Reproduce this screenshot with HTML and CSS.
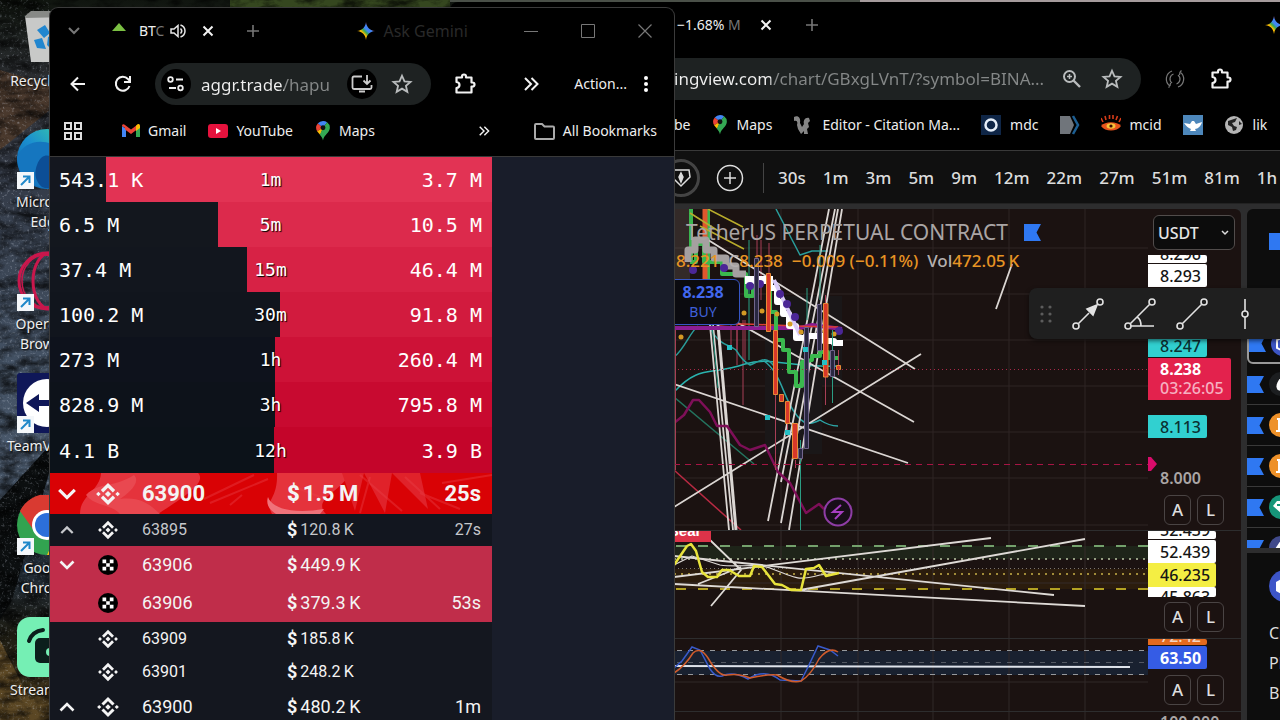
FILE: index.html
```html
<!DOCTYPE html>
<html lang="en">
<head>
<meta charset="utf-8">
<title>Desktop</title>
<meta name="viewport" content="width=device-width, initial-scale=1">
<link rel="stylesheet" href="styles.css">
</head>
<body class="desktop">

<svg class="defs" width="0" height="0" aria-hidden="true">
  <defs>
    <linearGradient id="gem" x1="0" y1="1" x2="1" y2="0"><stop offset="0.2" stop-color="#fbbc04"/><stop offset="0.36" stop-color="#fbbc04"/><stop offset="0.46" stop-color="#34a853"/><stop offset="0.55" stop-color="#4285f4"/><stop offset="0.66" stop-color="#4285f4"/><stop offset="0.8" stop-color="#ea4335"/></linearGradient>
    <linearGradient id="edge" x1="0" y1="1" x2="1" y2="0"><stop offset="0" stop-color="#0c59a4"/><stop offset="0.5" stop-color="#1b8fd0"/><stop offset="1" stop-color="#3fd8a0"/></linearGradient>
  </defs>
  <symbol id="i-gemini" viewBox="0 0 20 20"><path d="M10 0C10.800 6 14 9.200 20 10C14 10.800 10.800 14 10 20C9.200 14 6 10.800 0 10C6 9.200 9.200 6 10 0Z" fill="url(#gem)"/></symbol>
  <symbol id="i-close" viewBox="0 0 12 12"><path d="M1.500 1.500L10.500 10.500M10.500 1.500L1.500 10.500" stroke="currentColor" stroke-width="2" fill="none"/></symbol>
  <symbol id="i-plus" viewBox="0 0 14 14"><path d="M7 1V13M1 7H13" stroke="currentColor" stroke-width="1.600" fill="none"/></symbol>
  <symbol id="i-star" viewBox="0 0 24 24"><path d="M12 3L14.700 9.100L21.300 9.700L16.300 14.100L17.800 20.600L12 17.100L6.200 20.600L7.700 14.100L2.700 9.700L9.300 9.100Z" stroke="currentColor" stroke-width="2" fill="none"/></symbol>
  <symbol id="i-puzzle" viewBox="0 0 24 24"><path d="M3.500 5.500H9V4.500A2 2 0 0 1 13 4.500V5.500H18.500V10.500H19.500A2 2 0 0 1 19.500 14.500H18.500V20.500H3.500V16C7.500 15.500 7.500 10.500 3.500 10Z" stroke="currentColor" stroke-width="2.200" stroke-linejoin="round" fill="none"/></symbol>
  <symbol id="i-more" viewBox="0 0 16 14"><path d="M2 1L8 7L2 13M8.500 1L14.500 7L8.500 13" stroke="currentColor" stroke-width="2" fill="none"/></symbol>
  <symbol id="i-pin" viewBox="0 0 16 22"><path d="M8 0A7.500 7.500 0 0 0 2.200 2.800L8 7.500L12.500 1.500A7.500 7.500 0 0 0 8 0Z" fill="#4285f4"/><path d="M2.200 2.800A7.500 7.500 0 0 0 1.500 11.200L8 7.500Z" fill="#ea4335"/><path d="M1.500 11.200L8 7.500L5 15.500Z" fill="#fbbc04"/><path d="M12.500 1.500A7.500 7.500 0 0 1 15 10C13 14.500 9 16 8 21.500C7.500 18.500 6 17 4.500 15L8 7.500Z" fill="#34a853"/><circle cx="8" cy="7.500" r="2.700" fill="#111"/></symbol>
  <symbol id="i-binance" viewBox="0 0 22 22"><path d="M5.500 8.500L11 3L16.500 8.500M5.500 13.500L11 19L16.500 13.500" stroke="currentColor" stroke-width="3" fill="none"/><path d="M11 8.200L13.800 11L11 13.800L8.200 11ZM2.200 8.900L4.300 11L2.200 13.100L0.100 11ZM19.800 8.900L21.900 11L19.800 13.100L17.700 11Z" fill="currentColor"/></symbol>
  <symbol id="i-okx" viewBox="0 0 20 20"><circle cx="10" cy="10" r="10" fill="#000"/><path d="M4.500 4.500H8.200V8.200H4.500ZM11.800 4.500H15.500V8.200H11.800ZM8.200 8.200H11.800V11.800H8.200ZM4.500 11.800H8.200V15.500H4.500ZM11.800 11.800H15.500V15.500H11.800Z" fill="#fff"/></symbol>
  <symbol id="i-down" viewBox="0 0 16 10"><path d="M1.500 1.500L8 8L14.500 1.500" stroke="currentColor" stroke-width="2.600" fill="none"/></symbol>
  <symbol id="i-up" viewBox="0 0 16 10"><path d="M1.500 8.500L8 2L14.500 8.500" stroke="currentColor" stroke-width="2.600" fill="none"/></symbol>
  <symbol id="i-flag" viewBox="0 0 17 17"><path d="M0 0H17L12.500 8.500L17 17H0Z" fill="#2f78f2"/></symbol>
  <symbol id="i-shortcut" viewBox="0 0 17 17"><path d="M0 0H17V17H0Z" fill="#f4f7fa"/><path d="M4 13L12 5M6 4.500H12.500V11" stroke="#1f88c9" stroke-width="2" fill="none"/></symbol>
</svg>

<svg class="wallpaper" viewBox="0 0 1280 720" preserveAspectRatio="xMinYMin slice" aria-hidden="true">
  <defs>
    <linearGradient id="rock" x1="0" y1="0" x2="0" y2="1"><stop offset="0" stop-color="#10150f"/><stop offset="0.130" stop-color="#303238"/><stop offset="0.250" stop-color="#343b48"/><stop offset="0.500" stop-color="#435163"/><stop offset="0.650" stop-color="#4a596c"/><stop offset="0.800" stop-color="#222c36"/><stop offset="0.880" stop-color="#1c1b12"/><stop offset="1" stop-color="#4b3b1e"/></linearGradient>
    <filter id="grain" x="0" y="0" width="1" height="1"><feTurbulence type="fractalNoise" baseFrequency="0.050 0.100" numOctaves="5" seed="8"/><feColorMatrix values="0 0 0 0 0  0 0 0 0 0  0 0 0 0 0  2.400 0 0 0 -0.900"/></filter>
    <filter id="speck" x="0" y="0" width="1" height="1"><feTurbulence type="fractalNoise" baseFrequency="0.400" numOctaves="2" seed="3"/><feColorMatrix values="0 0 0 0 0.600  0 0 0 0 0.650  0 0 0 0 0.750  3 0 0 0 -1.700"/></filter>
  </defs>
  <path d="M0 0H1280V720H0Z" fill="url(#rock)"/>
  <path d="M0 70L50 85V110L0 150Z" fill="#4a392d"/>
  <path d="M230 0H450V8H230Z" fill="#35471f"/>
  <path d="M450 0H860V2H450Z" fill="#4a5048"/><path d="M860 0H1280V2H860Z" fill="#a59b9c"/>
  <path d="M0 500L50 445V470L12 600L0 620Z" fill="#0c0f10"/>
  <path d="M0 640L30 700L50 690V720H0Z" fill="#5b4724"/>
  <path d="M0 0H49V720H0Z" filter="url(#speck)" opacity="0.400"/>
  <path d="M0 0H450V720H0Z" filter="url(#grain)" opacity="0.700"/>
</svg>

<nav class="shortcuts" aria-label="Desktop shortcuts">
  <a class="shortcut" href="#"><svg class="shortcut-icon" viewBox="0 0 60 60"><path d="M8 5L52 5L46 51H14Z" fill="#c8c9c8"/><path d="M8 5L14 0H52V6L8 7Z" fill="#878986"/><path d="M20 19L28 14L33 22L27 27ZM17 29L25 27L29 38L20 37ZM31 26L39 22L42 31L34 38L30 34Z" fill="#2186cf"/></svg><span>Recycle Bin</span></a>
  <a class="shortcut" href="#"><svg class="shortcut-icon" viewBox="0 0 60 60"><circle cx="30" cy="30" r="30" fill="url(#edge)"/><path d="M0 28C8 10 30 8 46 22L52 36C36 38 34 34 35 28C22 22 14 42 28 59C12 57 0 44 0 28Z" fill="#1576bf"/><path d="M20 36C24 24 32 26 35 28C31 40 44 46 57 40C50 56 34 62 25 58C18 52 17 44 20 36Z" fill="#0c4e96"/><use href="#i-shortcut" x="0" y="43" width="17" height="17"/></svg><span>Microsoft<br>Edge</span></a>
  <a class="shortcut" href="#"><svg class="shortcut-icon" viewBox="0 0 60 60"><g fill="none" stroke="#c9174c" stroke-width="3"><circle cx="30" cy="30" r="28"/><ellipse cx="33" cy="30" rx="17" ry="28"/><ellipse cx="28" cy="30" rx="23" ry="26" stroke-width="1.500"/></g><use href="#i-shortcut" x="0" y="43" width="17" height="17"/></svg><span>Opera GX<br>Browser</span></a>
  <a class="shortcut" href="#"><svg class="shortcut-icon" viewBox="0 0 60 60"><rect width="60" height="60" rx="3" fill="#0f1758"/><circle cx="30" cy="30" r="24" fill="#fff"/><path d="M9 30L22 21V27H38V21L51 30L38 39V33H22V39Z" fill="#0f1758"/><use href="#i-shortcut" x="0" y="43" width="17" height="17"/></svg><span>TeamViewer</span></a>
  <a class="shortcut" href="#"><svg class="shortcut-icon" viewBox="0 0 60 60"><circle cx="30" cy="30" r="30" fill="#32a350"/><path d="M3 16A30 30 0 0 1 57 16L30 20Z" fill="#d93a31"/><path d="M3 16L18 37L30 15Z" fill="#d93a31"/><path d="M57 16A30 30 0 0 1 30 60L44 30L30 16Z" fill="#fbc116"/><circle cx="30" cy="30" r="15" fill="#fff"/><circle cx="30" cy="30" r="12" fill="#2c6fda"/><use href="#i-shortcut" x="0" y="43" width="17" height="17"/></svg><span>Google<br>Chrome</span></a>
  <a class="shortcut" href="#"><svg class="shortcut-icon" viewBox="0 0 60 60"><rect width="60" height="60" rx="13" fill="#75efb4"/><rect x="18" y="21" width="34" height="25" rx="5" fill="#0b1f1c"/><circle cx="33" cy="35" r="4" fill="#75efb4"/><path d="M12 24C14 18 18 14 26 13" stroke="#0b1f1c" stroke-width="4" stroke-linecap="round" fill="none"/></svg><span>Streamlabs</span></a>
</nav>

<section class="window window-back" aria-label="TradingView">
  <header class="tabs tabs-back">
    <span class="tab-title">−1.68% <span class="faded">M</span></span>
    <button class="icon-btn bright" aria-label="Close tab"><svg width="12" height="12"><use href="#i-close"/></svg></button>
    <button class="icon-btn dim tab-new" aria-label="New tab"><svg width="14" height="14"><use href="#i-plus"/></svg></button>
    <button class="icon-btn gemini-edge" aria-label="Gemini"><svg width="18" height="18"><use href="#i-gemini"/></svg></button>
  </header>
  <div class="addressbar addressbar-back">
    <div class="omnibox omnibox-back">
      <input class="url url-back" aria-label="Address" value="ingview.com/chart/GBxgLVnT/?symbol=BINA..." readonly>
      <button class="icon-btn" aria-label="Zoom"><svg width="20" height="20" viewBox="0 0 20 20" fill="none" stroke="currentColor"><circle cx="7.500" cy="7.500" r="5.500" stroke-width="2"/><path d="M11.500 11.500L18 18" stroke-width="2.400"/><path d="M7.500 5V10M5 7.500H10" stroke-width="1.500"/></svg></button>
      <button class="icon-btn" aria-label="Bookmark"><svg width="22" height="22"><use href="#i-star"/></svg></button>
    </div>
    <button class="icon-btn dim ext-loop" aria-label="Extension"><svg width="20" height="20" viewBox="0 0 20 20" fill="none" stroke="#777" stroke-width="1.200"><path d="M7 2A8.500 8.500 0 0 0 5 17M5 17L3.500 18.500M5 17L5.500 14M13 18A8.500 8.500 0 0 0 15 3M15 3L16.500 1.500M15 3L14.500 6"/><path d="M8.500 5A5.200 5.200 0 0 0 7 14M11.500 15A5.200 5.200 0 0 0 13 6"/></svg></button>
    <button class="icon-btn bright" aria-label="Extensions"><svg width="24" height="24"><use href="#i-puzzle"/></svg></button>
  </div>
  <nav class="bookmarks bookmarks-back" aria-label="Bookmarks">
    <a href="#">be</a>
    <a href="#"><svg width="16" height="20"><use href="#i-pin"/></svg>Maps</a>
    <a href="#"><svg width="20" height="20" viewBox="0 0 20 20"><path d="M1 2C5 0 8 3 7 8L9 12L11 9C10 6 12 2 16 3L17 6L15 8L16 12L14 14L15 19H11V16L8 19L5 14L4 10C5 7 4 5 1 6Z" fill="#858585"/></svg>Editor - Citation Ma...</a>
    <a href="#"><svg width="20" height="20" viewBox="0 0 20 20"><path d="M0 0H20V20H0Z" fill="#0f2647"/><circle cx="10" cy="10" r="5.500" fill="none" stroke="#e6eef8" stroke-width="2.500"/></svg>mdc</a>
    <a href="#" aria-label="Arrow"><svg width="20" height="20" viewBox="0 0 20 20"><path d="M0 1H10L14 10L10 19H0Z" fill="#70757b"/><path d="M13 1L18 10L13 19" stroke="#1d5f93" stroke-width="2.500" fill="none"/></svg></a>
    <a href="#"><svg width="20" height="20" viewBox="0 0 20 20"><path d="M0 11C4 6 16 6 20 11C16 17 4 17 0 11Z" fill="#e8541c"/><ellipse cx="10" cy="11" rx="4.500" ry="2.800" fill="#f7c33a"/><circle cx="10" cy="11" r="1.600" fill="#3b0d04"/><path d="M2 7L0 3M5 5L4 1M8.500 4V0M12 4V0M15 5L16.500 1M18 7L20 3" stroke="#d63b18" stroke-width="1.600"/></svg>mcid</a>
    <a href="#" aria-label="Lamp"><svg width="20" height="20" viewBox="0 0 20 20"><path d="M0 0H20V20H0Z" fill="#4d87bb"/><path d="M1 8L7 9L9 6H11L13 9L19 7C18 11 15 14 12 14L13 16H7L8 14C5 13 3 11 1 8Z" fill="#fff"/></svg></a>
    <a href="#"><svg width="20" height="20" viewBox="0 0 20 20"><circle cx="10" cy="10" r="9" fill="#b5b5b5"/><path d="M4 6L10 4L13 3L11 7L8 8L10 11L13 12L12 15L9 16L8 12L4 10Z" fill="#222"/><path d="M15 6L18 9L15 10Z" fill="#222"/></svg>lik</a>
  </nav>
  <div class="timeframes">
    <button class="ring" aria-label="Symbol shape"><svg width="22" height="22" viewBox="0 0 22 22" fill="none" stroke="#ddd" stroke-width="1.500"><path d="M3 3H19L20 10L11 19L2 10Z"/><path d="M11 6L13 10L11 15L9 10Z" fill="#ddd"/></svg></button>
    <button class="add-symbol" aria-label="Add symbol"><svg width="28" height="28" viewBox="0 0 28 28" fill="none" stroke="#ddd" stroke-width="1.500"><circle cx="14" cy="14" r="12.500"/><path d="M14 8V20M8 14H20"/></svg></button>
    <span class="divider"></span>
    <button>30s</button><button>1m</button><button>3m</button><button>5m</button><button>9m</button><button>12m</button><button>22m</button><button>27m</button><button>51m</button><button>81m</button><button>1h</button>
  </div>

  <div class="workspace">
    <main class="chart">
      <div class="pane">
        <svg class="plot" viewBox="674 209 474 321" preserveAspectRatio="xMinYMin slice" role="img" aria-label="Price chart">
          <path d="M781 209V530M858 209V530M933 209V530M1009 209V530M1085 209V530M674 248H1148M674 294H1148M674 340H1148M674 386H1148M674 432H1148M674 478H1148M674 525H1148" stroke="#2e2525" fill="none"/>
          <path d="M765 296H842V385H822V454H765Z" fill="#1a1718"/>
          <path d="M674 209H690V280H674Z" fill="#7c7570" opacity="0.250"/>
          <g fill="none" stroke-linejoin="round">
            <path d="M691 209V262M708 209V280" stroke="#3bb54e" stroke-width="4"/>
            <path d="M705 209V282" stroke="#e0572d" stroke-width="5"/>
            <path d="M708 209L743 227M700 226L744 249M690 213L720 232" stroke="#b9ac2b" stroke-width="1.500"/>
            <path d="M757 235V330M769 243V332M743 320V405M731 320V350M737 325V350M745 320V360M761 240V300M737 320V365" stroke="#a83f56"/>
            <path d="M749 240V360M776 330V350M719 330V345" stroke="#28a186"/>
            <path d="M674 470L741 530" stroke="#b92a43" stroke-width="1.500"/>
            <path d="M674 397L754 464" stroke="#24745f" stroke-width="1.500"/>
            <path d="M674 392C700 364 710 376 745 364C770 356 790 368 838 366" stroke="#2ab3ae" stroke-width="1.500"/>
            <path d="M776 209L800 255L812 251H828M674 357C684 350 690 332 698 326M710 328C720 346 728 344 736 350C742 360 748 364 750 365C762 360 766 356 774 366" stroke="#2a9d9b" stroke-width="1.500"/>
            <path d="M764 361C780 372 783 395 793 410C804 428 812 424 820 420C826 424 832 426 838 426" stroke="#2ca4a5" stroke-width="1.500"/>
            <g stroke="#dbd6d3" stroke-width="1.800">
              <path d="M829 209L768 521M835 209L781 482M838 209L781 523M842 209L789 530M705 238L915 369M738 323L914 422M674 384L908 463M674 507L921 354M996 309L1012 264M710 325L729 530M713 325L733 530"/>
              <path d="M718 325L736 530" stroke-width="3"/>
            </g>
            <path d="M712 325L718 388" stroke="#1f8f78"/>
            <path d="M674 423L684 415L693 400L699 400L710 412L717 426H727L740 445L750 450L765 445L778 472L790 483L806 513L819 504L824 509" stroke="#7e0f58" stroke-width="2.500"/>
            <path d="M674 328H800L812 325L842 329" stroke="#8b1d93" stroke-width="4"/>
            <path d="M720 325C750 322 760 326 838 327" stroke="#db3e35" stroke-width="1.500"/>
            <path d="M690 262H696V244H704V262H722V274H746V296H753V282H770V312H776V340H783V350H789V372H796V386H802V362L812 360V356H820V352H828V358H838" stroke="#3ab84e" stroke-width="4"/>
            <path d="M688 262V250H695V240H706V250H714V258H726V266H736V274H746" stroke="#a5a0a0" stroke-width="7"/>
            <path d="M745 280H770" stroke="#fff" stroke-width="8"/>
            <path d="M770 276V288H777V302H783V314H789V326H796V338H806V336H824V341H834V343H843" stroke="#fff" stroke-width="6"/>
            <path d="M774 280L800 335" stroke="#d9cbf8" stroke-width="4"/>
          </g>
          <g fill="#4b2696"><circle cx="693" cy="270" r="4"/><circle cx="724" cy="268" r="4"/><circle cx="750" cy="286" r="4"/><circle cx="760" cy="284" r="4"/><circle cx="780" cy="294" r="4"/><circle cx="787" cy="304" r="4"/><circle cx="795" cy="317" r="4"/><circle cx="839" cy="331" r="4"/></g>
          <g fill="#d49a24"><circle cx="681" cy="337" r="2.500"/><circle cx="744" cy="313" r="2.500"/><circle cx="762" cy="311" r="2.500"/><circle cx="777" cy="314" r="2.500"/><circle cx="790" cy="324" r="2.500"/><circle cx="801" cy="332" r="2.500"/><circle cx="820" cy="331" r="2.500"/><circle cx="834" cy="334" r="2.500"/></g>
          <path d="M675.500 330V470M775.500 395V470M787.500 402V430M795.500 460V468M825.500 295V405M838.500 350V375" stroke="#a83f56"/>
          <path d="M800.500 440V530M807 288V320M832.500 330V403M820 245V300" stroke="#2b9d83"/>
          <g fill="#d8382a" stroke="#e88a35"><path d="M766.500 273.500H770.500V331.500H766.500ZM773.500 330.500H777.500V394.500H773.500ZM779.500 394.500H783.500V401.500H779.500ZM785.500 401.500H789.500V423.500H785.500ZM792.500 423.500H797.500V458.500H792.500ZM823.500 303.500H828V377H823.500ZM836.500 365.500H840.500V369.500H836.500Z"/></g>
          <g fill="#292741" stroke="#71658c"><path d="M754.500 258.500H758.500V326.500H754.500ZM804.500 327.500H808.500V448.500H804.500ZM798.500 448.500H802.500V458.500H798.500ZM817.500 304.500H821.500V350.500H817.500ZM830.500 350.500H834.500V376.500H830.500Z"/></g>
          <g fill="#25c0c5"><path d="M727 345H732V350H727ZM765 415H770V420H765ZM785 430H790V435H785ZM803 347H808V352H803ZM822 360H827V365H822Z"/></g>
          <path d="M674 369.500H1148" stroke="#a92948" stroke-dasharray="1 3"/>
          <path d="M674 464.500H1148" stroke="#a61544" stroke-dasharray="6 5"/>
          <path d="M674.500 209V530" stroke="#555"/>
        </svg>
        <div class="legend">
          <h1 class="symbol">TetherUS PERPETUAL CONTRACT <svg width="17" height="17" aria-hidden="true"><use href="#i-flag"/></svg></h1>
          <p class="ohlc"><span>8.221</span><span><b>C</b>8.238</span><span>−0.009 (−0.11%)</span><span><b>Vol</b>472.05&#8201;K</span></p>
        </div>
        <button class="buy"><strong>8.238</strong>BUY</button>
        <button class="bolt" aria-label="Events"><svg width="30" height="30" viewBox="0 0 30 30"><circle cx="15" cy="15" r="13.500" fill="#170e18" stroke="#8e3da5" stroke-width="2"/><path d="M18 8L10 15H19L12 22" fill="none" stroke="#a63fc0" stroke-width="2"/></svg></button>
        <div class="axis">
          <select class="currency" aria-label="Currency"><option>USDT</option></select>
          <span class="tag white cut-top"><i>8.296</i></span>
          <span class="tag white">8.293</span>
          <span class="tag cyan after-tools">8.247</span>
          <span class="tag last"><strong>8.238</strong><span>03:26:05</span></span>
          <span class="tag cyan lower">8.113</span>
          <svg class="marker" width="9" height="14" viewBox="0 0 9 14" aria-hidden="true"><path d="M0 0H3L9 7L3 14H0Z" fill="#d90c6b"/></svg>
          <span class="tick">8.000</span>
          <span class="scale"><button>A</button><button>L</button></span>
        </div>
      </div>
      <div class="pane">
        <svg class="plot" viewBox="674 531 474 107" preserveAspectRatio="xMinYMin slice" role="img" aria-label="RSI">
          <path d="M674 546H1148V559H674Z" fill="#1e2419"/><path d="M674 569H1148V589H674Z" fill="#2b1c0d"/>
          <path d="M781 531V638M858 531V638M933 531V638M1009 531V638M1085 531V638M674 583H1148" stroke="#342b2b"/>
          <path d="M676 546H1148" stroke="#74a16c" stroke-width="2" stroke-dasharray="10 12"/>
          <path d="M676 589H1148" stroke="#b3a223" stroke-width="2" stroke-dasharray="10 12"/>
          <path d="M674 559H1148" stroke="#bcc6a5" stroke-width="1.500" stroke-dasharray="2 5"/>
          <path d="M674 568.500H1148" stroke="#7d7872" stroke-dasharray="1 3"/>
          <path d="M674 574H1148" stroke="#c9b148" stroke-width="1.500" stroke-dasharray="2 5"/>
          <g fill="none" stroke="#dedad6" stroke-width="1.800" stroke-linejoin="round">
            <path d="M674 577L991 538M800 590L1085 539M674 556L1054 595M674 584L1085 606M710 540L741 570L711 606M698 584L741 567"/>
            <path d="M674 565L692 556L720 565C740 568 760 562 775 570C800 580 800 580 820 575L839 573" stroke-width="1.200"/>
            <path d="M674 565L687 546L691 544L696 551L702 572L708 577H717L722 570H729L739 576H750L754 566L762 567L775 584L782 585L791 590H801L806 569L814 568L819 565L826 576L839 573" stroke="#e8e33c" stroke-width="2.500"/>
          </g>
          <path d="M674 531H711V542H674Z" fill="#dd3349"/><text class="bear" x="668" y="536">Bear</text>
          <path d="M674.500 531V638" stroke="#555"/>
        </svg>
        <div class="axis axis-rsi">
          <span class="tag wide white cut-top"><i>52.439</i></span>
          <span class="tag wide white">52.439</span>
          <span class="tag wide yellow">46.235</span>
          <span class="tag wide white cut-bottom">45.863</span>
          <span class="scale"><button>A</button><button>L</button></span>
        </div>
      </div>
      <div class="pane">
        <svg class="plot" viewBox="674 639 474 72" preserveAspectRatio="xMinYMin slice" role="img" aria-label="Stochastic">
          <path d="M674 651H1148V675H674Z" fill="#192130"/>
          <path d="M781 639V711M858 639V711M933 639V711M1009 639V711M1085 639V711M674 682H1148" stroke="#302829"/>
          <path d="M677 650.500H1148M677 674.500H1148" stroke="#96999d" stroke-dasharray="5 6"/>
          <path d="M677 662.500H1148" stroke="#535862" stroke-dasharray="5 6"/>
          <path d="M674 666L1130 667" stroke="#dde2ea" stroke-width="2"/>
          <g fill="none" stroke-width="1.500"><path d="M674 668L682 661L692 647L700 650L710 669Q716 678 722 676Q733 671 748 679Q765 668 780 680L801 681L808 667L818 646L830 650L838 656" stroke="#385acb"/><path d="M674 673Q685 666 693 653Q700 646 708 658Q719 677 727 675Q739 673 750 678Q768 674 777 675Q792 684 801 681Q811 675 819 659Q829 646 838 652" stroke="#cf5c2c"/></g>
          <path d="M674.500 639V711" stroke="#555"/>
        </svg>
        <div class="axis axis-stoch">
          <span class="tag orange cut-top"><i>72.42</i></span>
          <span class="tag blue"><strong>63.50</strong></span>
          <span class="scale"><button>A</button><button>L</button></span>
        </div>
      </div>
      <div class="pane">
        <svg class="plot" viewBox="674 712 474 8" preserveAspectRatio="xMinYMin slice" aria-hidden="true"><path d="M781 712V720M858 712V720M933 712V720M1009 712V720M1085 712V720" stroke="#302829"/></svg>
        <div class="axis axis-last"><span class="tick">100.000</span></div>
      </div>
    </main>
    <aside class="sidebar">
      <div class="watchlist">
        <div class="watch-head"><svg width="17" height="17" aria-hidden="true"><use href="#i-flag"/></svg></div>
        <div class="watch-row selected"><svg width="17" height="17"><use href="#i-flag"/></svg><svg width="24" height="24" viewBox="0 0 24 24"><circle cx="12" cy="12" r="12" fill="#3c55c4"/><path d="M12 5L18 8V16L12 19L6 16V8Z" fill="none" stroke="#fff" stroke-width="2"/></svg></div>
        <div class="watch-row"><svg width="17" height="17"><use href="#i-flag"/></svg><svg width="24" height="24" viewBox="0 0 24 24"><circle cx="12" cy="12" r="12" fill="#1c1e20"/><path d="M12 5C17 11 18 18 12 19C5 18 7 11 12 5Z" fill="#fff"/></svg></div>
        <div class="watch-row"><svg width="17" height="17"><use href="#i-flag"/></svg><svg width="24" height="24" viewBox="0 0 24 24"><circle cx="12" cy="12" r="12" fill="#ee9129"/><path d="M8 6H14C18 7 17 11 14 12C19 13 17 18 13 18H7M10 5V19" fill="none" stroke="#fff" stroke-width="2"/></svg></div>
        <div class="watch-row"><svg width="17" height="17"><use href="#i-flag"/></svg><svg width="24" height="24" viewBox="0 0 24 24"><circle cx="12" cy="12" r="12" fill="#ee9129"/><path d="M8 6H14C18 7 17 11 14 12C19 13 17 18 13 18H7M10 5V19" fill="none" stroke="#fff" stroke-width="2"/></svg></div>
        <div class="watch-row"><svg width="17" height="17"><use href="#i-flag"/></svg><svg width="24" height="24" viewBox="0 0 24 24"><circle cx="12" cy="12" r="12" fill="#169579"/><path d="M8 6H18L21 11L13 19L4 11Z" fill="#fff"/><path d="M8 10H18M13 8V15" stroke="#169579" stroke-width="2"/></svg></div>
        <div class="watch-row"><svg width="17" height="17"><use href="#i-flag"/></svg><svg width="24" height="24" viewBox="0 0 24 24"><circle cx="12" cy="12" r="12" fill="#40498a"/><path d="M12 4L18 13L12 20L6 13Z" fill="#fff"/></svg></div>
      </div>
      <div class="details">
        <svg width="32" height="32" viewBox="0 0 32 32" aria-hidden="true"><circle cx="16" cy="16" r="16" fill="#3d55c8"/><path d="M7 12L16 7L25 12V21L16 26L7 21Z" fill="#fff"/></svg>
        <span>Chainlink</span><span>Platform</span><span>Blockchain</span>
      </div>
    </aside>
    <div class="tools" role="toolbar" aria-label="Favourite drawing tools">
      <svg width="12" height="18" viewBox="0 0 12 18" fill="#5c5c5c" aria-hidden="true"><circle cx="2" cy="2" r="1.600"/><circle cx="10" cy="2" r="1.600"/><circle cx="2" cy="9" r="1.600"/><circle cx="10" cy="9" r="1.600"/><circle cx="2" cy="16" r="1.600"/><circle cx="10" cy="16" r="1.600"/></svg>
      <button aria-label="Arrow"><svg width="32" height="32" viewBox="0 0 32 32" fill="none" stroke="#e2e2e2" stroke-width="1.600"><circle cx="4" cy="28" r="3"/><circle cx="28" cy="4" r="3"/><path d="M6.500 25.500L17 15"/><path d="M25 7L21 17L15 11Z" fill="#e2e2e2"/></svg></button>
      <button aria-label="Trend angle"><svg width="32" height="32" viewBox="0 0 32 32" fill="none" stroke="#e2e2e2" stroke-width="1.600"><circle cx="4" cy="28" r="3"/><circle cx="28" cy="4" r="3"/><path d="M6.500 25.500L25.500 6.500M7 28H30M13 19C17 21 17 25 17 28"/></svg></button>
      <button aria-label="Trend line"><svg width="32" height="32" viewBox="0 0 32 32" fill="none" stroke="#e2e2e2" stroke-width="1.600"><circle cx="4" cy="28" r="3"/><circle cx="28" cy="4" r="3"/><path d="M6.500 25.500L25.500 6.500"/></svg></button>
      <button aria-label="Vertical line"><svg width="32" height="32" viewBox="0 0 32 32" fill="none" stroke="#e2e2e2" stroke-width="1.600"><circle cx="17" cy="16" r="3"/><path d="M17 1V13M17 19V31"/></svg></button>
    </div>
  </div>
</section>

<section class="window window-front" aria-label="Aggr">
  <header class="tabs tabs-front">
    <button class="icon-btn dim" aria-label="Search tabs"><svg width="12" height="8" viewBox="0 0 12 8"><path d="M1 1L6 6L11 1" stroke="#777" stroke-width="2" fill="none"/></svg></button>
    <svg class="tab-fav" width="14" height="8" viewBox="0 0 14 8" aria-hidden="true"><path d="M7 0L14 8H0Z" fill="#7bc043"/></svg>
    <span class="tab-title">BT<span class="faded">C</span></span>
    <button class="icon-btn bright mute" aria-label="Mute tab"><svg width="16" height="14" viewBox="0 0 16 14" fill="none" stroke="#e6e6e6" stroke-width="1.500"><path d="M1 5H4L8 1.500V12.500L4 9H1ZM10.500 4.500C12 6 12 8 10.500 9.500M10.500 1C16.500 3 16.500 11 10.500 13"/></svg></button>
    <button class="icon-btn bright" aria-label="Close tab"><svg width="12" height="12"><use href="#i-close"/></svg></button>
    <button class="icon-btn dim tab-new" aria-label="New tab"><svg width="14" height="14"><use href="#i-plus"/></svg></button>
    <button class="ask"><svg width="18" height="18" aria-hidden="true"><use href="#i-gemini"/></svg>Ask Gemini</button>
    <span class="window-controls">
      <button class="icon-btn" aria-label="Minimize"><svg width="14" height="14" viewBox="0 0 14 14"><path d="M0 7.500H14" stroke="#777"/></svg></button>
      <button class="icon-btn" aria-label="Maximize"><svg width="14" height="14" viewBox="0 0 14 14"><path d="M0.500 0.500H13.500V13.500H0.500Z" fill="none" stroke="#777"/></svg></button>
      <button class="icon-btn" aria-label="Close"><svg width="14" height="14" viewBox="0 0 14 14"><path d="M0.500 0.500L13.500 13.500M13.500 0.500L0.500 13.500" stroke="#777" stroke-width="1.200"/></svg></button>
    </span>
  </header>
  <div class="addressbar addressbar-front">
    <button class="icon-btn bright" aria-label="Back"><svg width="16" height="16" viewBox="0 0 16 16"><path d="M15 8H2M8 1.500L1.500 8L8 14.500" stroke="currentColor" stroke-width="2" fill="none"/></svg></button>
    <button class="icon-btn bright reload" aria-label="Reload"><svg width="18" height="18" viewBox="0 0 18 18"><path d="M15.500 11A7 7 0 1 1 14 4L16 6M16 1V7H10" stroke="currentColor" stroke-width="2" fill="none"/></svg></button>
    <div class="omnibox omnibox-front">
      <button class="round" aria-label="Site information"><svg width="18" height="16" viewBox="0 0 18 16" fill="none" stroke="#eee" stroke-width="1.800"><circle cx="3.500" cy="3.500" r="2.300"/><path d="M9 3.500H16M2 12H9"/><circle cx="13.500" cy="12" r="2.300"/></svg></button>
      <input class="url url-front" aria-label="Address" value="aggr.trade/hapu" readonly>
      <button class="round" aria-label="Install app"><svg width="22" height="18" viewBox="0 0 22 18" fill="none" stroke="#ccc" stroke-width="1.800"><path d="M11 1.500H3Q1.500 1.500 1.500 3V12.500Q1.500 14 3 14H19Q20.500 14 20.500 12.500V10M8 16.500H14M16 0V9M12.500 5.500L16 9L19.500 5.500"/></svg></button>
      <button class="icon-btn" aria-label="Bookmark"><svg width="22" height="22"><use href="#i-star"/></svg></button>
    </div>
    <button class="icon-btn bright puzzle" aria-label="Extensions"><svg width="24" height="24"><use href="#i-puzzle"/></svg></button>
    <button class="icon-btn bright" aria-label="More"><svg width="16" height="14"><use href="#i-more"/></svg></button>
    <button class="actions">Action...<svg width="4" height="16" viewBox="0 0 4 16" fill="#fff" aria-hidden="true"><circle cx="2" cy="2" r="2"/><circle cx="2" cy="8" r="2"/><circle cx="2" cy="14" r="2"/></svg></button>
  </div>
  <nav class="bookmarks bookmarks-front" aria-label="Bookmarks">
    <a href="#" class="apps" aria-label="Apps"><svg width="18" height="18" viewBox="0 0 18 18" fill="none" stroke="#ddd" stroke-width="2"><path d="M1 1H7V7H1ZM11 1H17V7H11ZM1 11H7V17H1ZM11 11H17V17H11Z"/></svg></a>
    <a href="#"><svg width="18" height="14" viewBox="0 0 18 14"><path d="M0 2V13H4V5Z" fill="#4285f4"/><path d="M18 2V13H14V5Z" fill="#34a853"/><path d="M0 2C0 0 2 0 3 1L9 5.500L15 1V5.500L9 10L3 5.500V4Z" fill="#ea4335"/><path d="M14 2C16 -1 18 0 18 2L18 4L14 7Z" fill="#fbbc04"/></svg>Gmail</a>
    <a href="#"><svg width="20" height="14" viewBox="0 0 20 14"><rect width="20" height="14" rx="3" fill="#e6123d"/><path d="M8 4L13 7L8 10Z" fill="#fff"/></svg>YouTube</a>
    <a href="#"><svg width="16" height="20"><use href="#i-pin"/></svg>Maps</a>
    <button class="icon-btn bright overflow" aria-label="More bookmarks"><svg width="12" height="10"><use href="#i-more"/></svg></button>
    <a href="#" class="all"><svg width="21" height="17" viewBox="0 0 21 17"><path d="M1 2Q1 1 2 1H8L10.500 3.500H19Q20 3.500 20 4.500V15Q20 16 19 16H2Q1 16 1 15Z" fill="none" stroke="#aaa" stroke-width="2"/></svg>All Bookmarks</a>
  </nav>
  <div class="aggr">
    <div class="feed">
      <table class="stats">
        <tbody>
          <tr class="s1"><td>543.1 K</td><th>1m</th><td>3.7 M</td></tr>
          <tr class="s2"><td>6.5 M</td><th>5m</th><td>10.5 M</td></tr>
          <tr class="s3"><td>37.4 M</td><th>15m</th><td>46.4 M</td></tr>
          <tr class="s4"><td>100.2 M</td><th>30m</th><td>91.8 M</td></tr>
          <tr class="s5"><td>273 M</td><th>1h</th><td>260.4 M</td></tr>
          <tr class="s6"><td>828.9 M</td><th>3h</th><td>795.8 M</td></tr>
          <tr class="s7"><td>4.1 B</td><th>12h</th><td>3.9 B</td></tr>
        </tbody>
      </table>
      <div class="trades-wrap">
        <svg class="blaze" viewBox="0 0 442 41" preserveAspectRatio="none" aria-hidden="true">
          <path d="M0 0H442V41H0Z" fill="#d90205"/>
          <path d="M30 41C30 22 50 18 51 0H148C158 10 130 26 108 41Z" fill="#e5333c"/>
          <path d="M36 22C50 8 62 16 84 2C92 10 76 22 70 26C90 24 98 30 110 41H70C60 30 45 34 36 22Z" fill="#e94850"/>
          <path d="M222 41C214 26 228 28 227 0H300C290 20 262 26 276 41Z" fill="#e5333c"/>
          <path d="M218 24C222 36 244 41 274 36L270 41H226C218 36 216 30 218 24Z" fill="#f0727a"/>
          <path d="M292 0L305 38L314 0L335 40L342 0L378 36L370 0Z" fill="#e0222a"/>
          <path d="M154 26L204 2M160 30L218 6M180 32L192 22M310 2L352 38M355 4L390 36M240 12L280 28M392 10L442 2M320 4L310 40M370 20L410 36" stroke="#e9424a" stroke-width="2" opacity="0.400"/>
        </svg>
        <table class="trades">
          <tbody>
            <tr class="t-huge"><td><svg width="20" height="12"><use href="#i-down"/></svg></td><td><svg width="24" height="24"><use href="#i-binance"/></svg></td><td>63900</td><td><b>$</b>1.5&#8201;M</td><td>25s</td></tr>
            <tr class="t-small soft"><td><svg width="14" height="10"><use href="#i-up"/></svg></td><td><svg class="white-mark" width="20" height="20"><use href="#i-binance"/></svg></td><td>63895</td><td><b>$</b>120.8&#8201;K</td><td>27s</td></tr>
            <tr class="t-big pink"><td><svg width="16" height="10"><use href="#i-down"/></svg></td><td><svg width="20" height="20"><use href="#i-okx"/></svg></td><td>63906</td><td><b>$</b>449.9&#8201;K</td><td></td></tr>
            <tr class="t-big pink"><td></td><td><svg width="20" height="20"><use href="#i-okx"/></svg></td><td>63906</td><td><b>$</b>379.3&#8201;K</td><td>53s</td></tr>
            <tr class="t-small"><td></td><td><svg width="20" height="20"><use href="#i-binance"/></svg></td><td>63909</td><td><b>$</b>185.8&#8201;K</td><td></td></tr>
            <tr class="t-small"><td></td><td><svg width="20" height="20"><use href="#i-binance"/></svg></td><td>63901</td><td><b>$</b>248.2&#8201;K</td><td></td></tr>
            <tr class="t-big"><td><svg width="16" height="10"><use href="#i-up"/></svg></td><td><svg width="22" height="22"><use href="#i-binance"/></svg></td><td>63900</td><td><b>$</b>480.2&#8201;K</td><td>1m</td></tr>
          </tbody>
        </table>
      </div>
    </div>
  </div>
</section>
</body>
</html>
```
FILE: styles.css
```css
* { box-sizing: border-box; }
body, h1, p { margin: 0; }
button, input, select { font: inherit; color: inherit; border: 0; background: none; padding: 0; margin: 0; }
button { display: flex; align-items: center; justify-content: center; flex: none; }
a { color: inherit; text-decoration: none; }
svg { display: block; flex: none; }
table { border-collapse: collapse; }

.desktop {
  position: relative;
  height: 100vh;
  overflow: hidden;
  background: #14181a;
  color: #eee;
  font: 14px/20px "Noto Sans", "Open Sans", sans-serif;
}
.defs { position: absolute; }
.wallpaper { position: absolute; inset: 0; width: 100%; height: 100%; }

/* Desktop shortcuts */
.shortcuts { position: relative; width: 94px; padding-top: 11px; }
.shortcut {
  display: flex;
  flex-direction: column;
  align-items: center;
  height: 122px;
  text-align: center;
  text-shadow: 1px 1px 2px #000;
  white-space: nowrap;
}
.shortcut:first-child { height: 118px; }
.shortcut:first-child span { margin-top: 0; }
.shortcut-icon { width: 60px; height: 60px; flex: none; }
.shortcut span { margin-top: 3px; }

/* Windows */
.window { position: absolute; bottom: 0; display: flex; flex-direction: column; overflow: hidden; background: #000; }
.window-back { left: calc(50vw - 190px); right: 0; top: 2px; border-radius: 8px 0 0 0; padding-left: 224px; }
.window-front { left: 49px; width: calc(50vw - 14px); top: 7px; border: 1px solid #3b3b3b; border-bottom: 0; border-radius: 9px 9px 0 0; }

.tabs, .addressbar, .bookmarks, .timeframes { display: flex; align-items: center; flex: none; white-space: nowrap; }
.icon-btn { color: #b9bcbd; }
.bright { color: #f2f2f2; }
.dim { color: #777; }
.faded { color: #777; }

.omnibox { display: flex; align-items: center; height: 42px; background: #1e2222; }
.round { width: 30px; height: 30px; border-radius: 15px; background: #000; }
.url { min-width: 0; flex: 1; height: 28px; font-size: 17px; color: transparent; -webkit-background-clip: text; background-clip: text; outline: 0; }
.bookmarks a { display: flex; align-items: center; gap: 9px; }

/* Back window */
.tabs-back { height: 46px; padding-left: 3px; gap: 19px; }
.tabs-back .tab-new { margin-left: 14px; }
.gemini-edge { margin-left: auto; margin-right: -3px; }
.addressbar-back { height: 61px; padding-right: 47px; }
.omnibox-back { flex: 1; border-radius: 0 21px 21px 0; padding-right: 18px; gap: 19px; }
.url-back { margin-right: -12px; background-image: linear-gradient(90deg, #f0f0f0 97px, #858888 97px); }
.ext-loop { margin: 0 24px; }
.bookmarks-back { height: 42px; padding-bottom: 10px; gap: 21px; border-bottom: 1px solid #393939; }
.bookmarks-back a { flex: none; }
.timeframes { height: 53px; padding-top: 2px; background: #101010; border-bottom: 1px solid #222; gap: 17px; font-size: 17px; font-weight: 500; color: #dcdcdc; overflow: hidden; }
.ring { width: 38px; height: 38px; margin-left: -12px; border: 3px solid #444; border-radius: 19px; }
.add-symbol { margin: 0 2px 0 -1px; }
.divider { width: 1px; height: 30px; margin-right: -3px; background: #444; }

/* Chart */
.workspace { position: relative; flex: 1; min-height: 0; display: flex; gap: 6px; padding-top: 5px; background: #2d2d2e; }
.chart { flex: 1; min-width: 0; display: grid; grid-template-rows: 321fr 107fr 72fr 8fr; gap: 1px; overflow: hidden; border-radius: 0 6px 0 0; }
.pane { position: relative; display: flex; min-height: 0; overflow: hidden; background: #1b1211; }
.plot { flex: 1; min-width: 0; height: 100%; }
.bear { font: bold 15px "Liberation Sans", sans-serif; fill: #fff; }
.legend { position: absolute; left: 0; top: 8px; white-space: nowrap; }
.symbol { display: flex; align-items: center; gap: 16px; padding-left: 12px; font-size: 21px; line-height: 30px; font-weight: 400; color: #aaa5a5; }
.ohlc { display: flex; gap: 9px; padding-left: 2px; font-size: 17px; line-height: 28px; color: #e79424; font-weight: 500; }
.ohlc b { font-weight: 500; color: #b5b0b0; }
.buy { position: absolute; left: -10px; top: 70px; width: 76px; height: 46px; flex-direction: column; padding-left: 2px; border: 1px solid #3656c4; border-radius: 6px; background: #0b0b10; color: #3f60d8; line-height: 20px; }
.buy strong { color: #4167ee; font-size: 16px; }
.bolt { position: absolute; left: 149px; top: 288px; }

.axis { width: 93px; flex: none; display: flex; flex-direction: column; align-items: flex-start; padding-top: 6px; font-size: 16px; font-weight: 500; }
.currency { appearance: none; width: 82px; height: 35px; margin: 0 0 5px 5px; padding: 0 4px; border: 1px solid #514c4b; border-radius: 6px; background: #0c0c0c url("data:image/svg+xml,%3Csvg xmlns='http://www.w3.org/2000/svg' viewBox='0 0 8 6'%3E%3Cpath d='M1 1L4 4L7 1' stroke='%23ddd' stroke-width='1.500' fill='none'/%3E%3C/svg%3E") no-repeat right 5px center / 8px 6px; color: #e5e5e5; }
.tag { display: flex; align-items: center; flex: none; width: 59px; height: 23px; padding-left: 12px; border-radius: 0 2px 2px 0; color: #151515; }
.tag i { font-style: normal; }
.wide { width: 68px; }
.white { background: #fff; }
.cyan { background: #31d0d0; color: #0b3132; }
.yellow { background: #f4ee43; height: 24px; }
.orange { background: #e46a1e; color: #f3d4c0; }
.blue { background: #355ce5; color: #fff; }
.cut-top { height: 8px; margin-bottom: 1px; align-items: flex-end; overflow: hidden; }
.cut-top i { line-height: 18px; }
.cut-bottom { height: 10px; align-items: flex-start; overflow: hidden; line-height: 20px; }
.after-tools { margin-top: 47px; }
.last { flex-direction: column; align-items: flex-start; justify-content: center; width: 83px; height: 42px; margin-top: 1px; background: #e3224d; color: #fff; line-height: 19px; }
.last span { color: #f6b0c1; }
.lower { margin-top: 15px; }
.marker { margin-top: 19px; }
.tick { padding-left: 12px; line-height: 14px; font-weight: 600; color: #aaa5a5; }
.scale { display: flex; gap: 6px; padding-left: 16px; margin-top: 10px; }
.scale button { width: 27px; height: 30px; border: 1px solid #4a4444; border-radius: 6px; font-size: 17px; color: #ddd; }
.axis-rsi, .axis-stoch, .axis-last { padding-top: 0; }
.axis-rsi .scale { margin-top: 5px; }
.axis-stoch .cut-top { height: 6px; margin-bottom: 1px; }
.axis-stoch .scale { margin-top: 6px; }
.axis-last .tick { padding-top: 3px; }

.sidebar { width: 33px; flex: none; display: grid; grid-template-rows: 339fr 167fr; gap: 5px; overflow: hidden; }
.watchlist { min-height: 0; overflow: hidden; background: #0d0d0d; border-radius: 6px 0 0 0; }
.watch-head { height: 114px; padding: 24px 0 0 22px; }
.watch-row { display: flex; align-items: center; width: 80px; height: 41px; gap: 5px; border-bottom: 1px solid #393939; }
.selected { border: 2px solid #999; border-radius: 6px; }
.details { min-height: 0; overflow: hidden; display: flex; flex-direction: column; padding: 17px 0 0 22px; background: #0d0d0d; font-size: 16px; line-height: 30px; white-space: nowrap; color: #ddd; }
.details svg { margin-bottom: 16px; }

.tools { position: absolute; right: 0; top: 84px; width: 251px; height: 51px; display: flex; align-items: center; gap: 20px; padding-left: 11px; border-radius: 8px 0 0 8px; background: #1f1f1f; box-shadow: 0 2px 4px #0008; overflow: hidden; }

/* Front window */
.tabs-front { height: 46px; padding-left: 18px; }
.tab-fav { margin: 0 13px 8px 32px; }
.mute { margin: 0 16px 0 6px; }
.tabs-front .tab-new { margin-left: 32px; }
.ask { gap: 8px; margin-left: 97px; font-size: 16px; color: #292929; }
.window-controls { display: flex; gap: 43px; margin-left: auto; padding-right: 22px; }
.addressbar-front { height: 60px; padding: 0 26px 0 20px; }
.reload { margin: 0 23px 0 28px; }
.omnibox-front { flex: 1; max-width: 276px; border-radius: 21px; padding: 0 18px 0 6px; }
.url-front { margin-left: 10px; background-image: linear-gradient(90deg, #f0f0f0 83px, #858888 83px); }
.omnibox-front .icon-btn { margin-left: 14px; }
.puzzle { margin: 0 46px 0 22px; }
.actions { gap: 17px; margin-left: auto; }
.bookmarks-front { height: 43px; padding: 0 17px 8px 14px; gap: 22px; border-bottom: 1px solid #393939; }
.bookmarks-front a { gap: 8px; }
.apps { margin-right: 18px; }
.bookmarks-front .overflow { margin-left: auto; }
.all { margin-left: 22px; }

/* Trade feed */
.aggr { flex: 1; min-height: 0; overflow: hidden; background: #191d2a; }
.feed { width: 71%; max-width: 442px; background: #14171f; }
.stats, .stats tbody, .trades, .trades tbody { display: block; }
.stats { font-family: "DejaVu Sans Mono", monospace; font-size: 20px; }
.stats tr { display: grid; grid-template-columns: 1fr 60px 1fr; align-items: center; height: 45px; padding: 1px 10px 0 9px; color: #fff; }
.stats .s7 { height: 46px; }
.stats td, .stats th { padding: 0; }
.stats td:last-child { text-align: right; }
.stats th { font-size: 18px; font-weight: 400; text-shadow: 1px 1px 1px #000; }
.s1 { background: linear-gradient(90deg, #14171f 56px, #e23354 56px); }
.s2 { background: linear-gradient(90deg, #13171e 168px, #dc2a4c 168px); }
.s3 { background: linear-gradient(90deg, #12161e 197px, #d72245 197px); }
.s4 { background: linear-gradient(90deg, #11151d 230px, #d21b3e 230px); }
.s5 { background: linear-gradient(90deg, #0e121c 225px, #cd1237 225px); }
.s6 { background: linear-gradient(90deg, #0d121a 225px, #c80a30 225px); }
.s7 { background: linear-gradient(90deg, #0c1219 224px, #c4052a 224px); }

.trades-wrap { position: relative; }
.blaze { position: absolute; left: 0; top: 0; width: 100%; height: 41px; }
.trades { position: relative; font-family: Roboto, sans-serif; color: #f4f4f4; }
.trades tr { display: grid; grid-template-columns: 34px 48px 145px 1fr auto; align-items: center; padding-right: 11px; }
.trades td { display: flex; align-items: center; padding: 0; }
.trades td:nth-child(-n+2) { justify-content: center; }
.trades td:nth-child(3) { padding-left: 10px; }
.trades td:nth-child(4) { padding-left: 10px; gap: 3px; }
.t-huge { height: 41px; font-size: 22px; font-weight: 700; }
.t-small { height: 33px; font-size: 16px; }
.t-big { height: 38px; font-size: 18px; }
.t-small b, .t-big b { font-size: 18px; }
.soft { height: 32px; background: #12161f; color: #c6c8cc; }
.soft b, .white-mark { color: #f4f4f4; }
.pink { background: #c02d4a; }
```
